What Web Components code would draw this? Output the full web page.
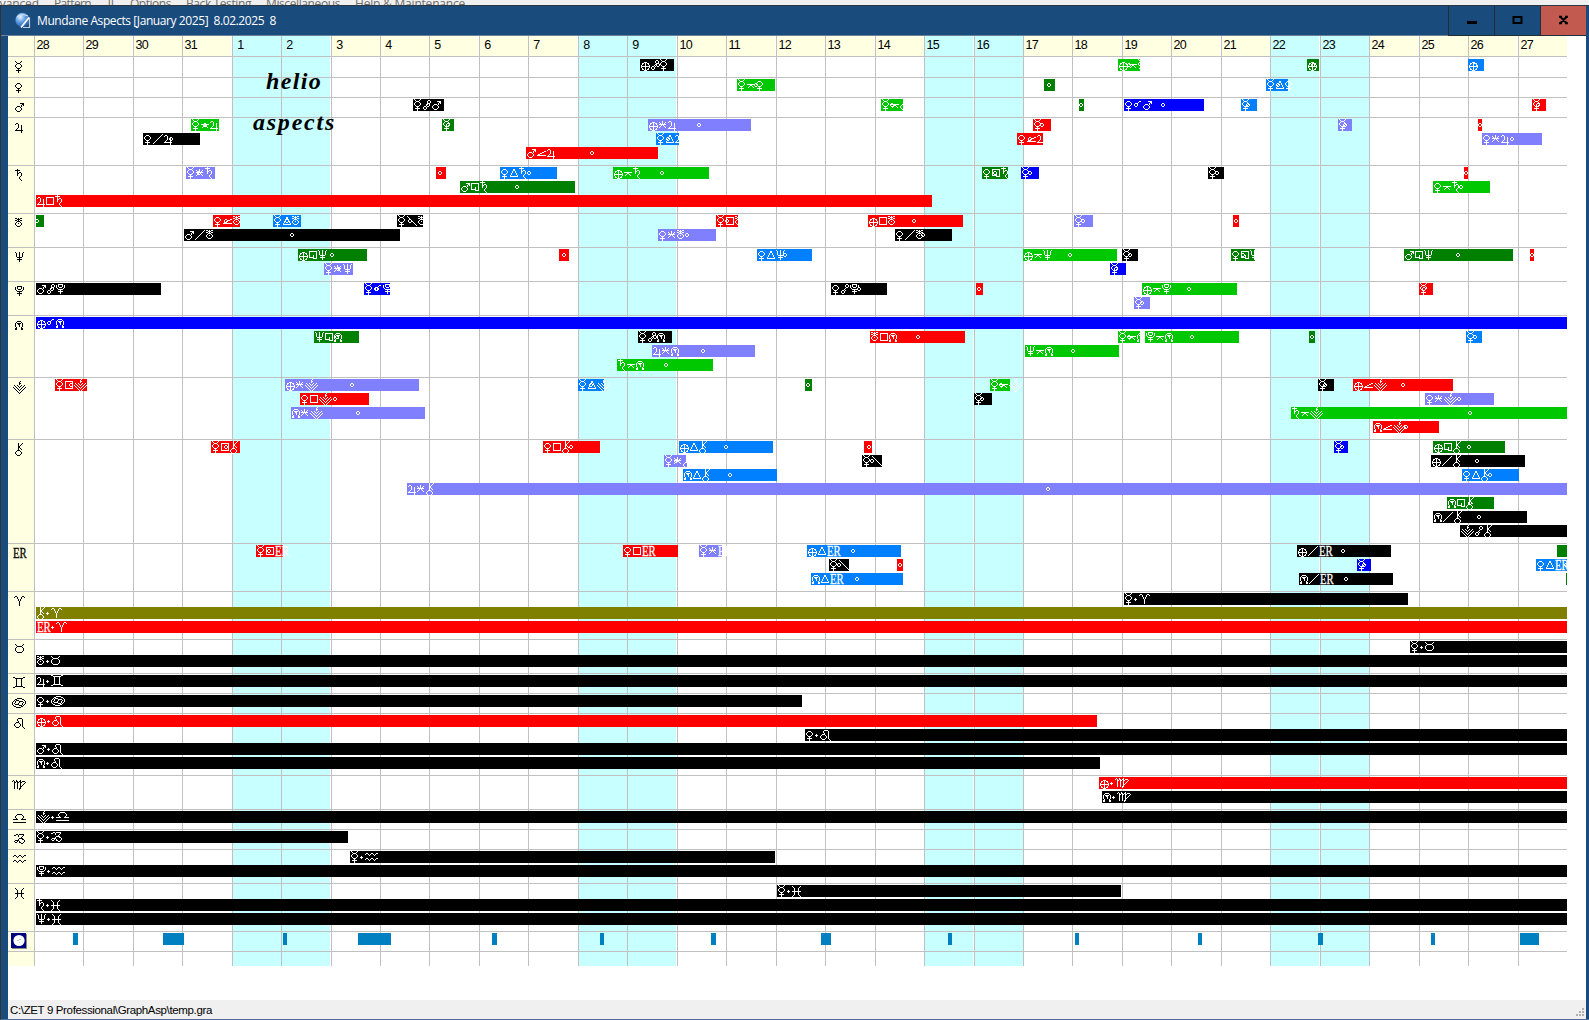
<!DOCTYPE html>
<html lang="en">
<head>
<meta charset="utf-8">
<title>Mundane Aspects</title>
<style>
html, body{ margin:0; height:100%; overflow:hidden; background:#f0f0f0; }
body{ font-family:"Liberation Sans", Arial, sans-serif; color:#000; }
</style>
</head>
<body>
<app-shell></app-shell>

<script>
const START = 34;
const END = 1567;
const dayX = k => Math.floor(34.3 + 49.46 * k);

const COLORS = {
   k:"#000", r:"#f00", g:"#008000", l:"#00c800", b:"#00f",
   s:"#0080ff", v:"#8080ff", o:"#808000", m:"#0080c0"
};

// symbol bitmaps: [first row, rows]
const SYMBOLS = {
   mer:[0,`#.....#.
.#...#..
..###...
.#...#..
#.....#.
#.....#.
.#...#..
..###...
...#....
.#####..
...#....
...#....`],
   ven:[2,`..###...
.#...#..
#.....#.
#.....#.
.#...#..
..###...
...#....
.#####..
...#....
...#....`],
   mars:[2,`.....####
.......##
......#.#
..###.#..
.#...#...
#.....#..
#.....#..
.#...#...
..###....`],
   jup:[2,`.##.....
#..#....
...#..#.
...#..#.
...#..#.
..#...#.
.#....#.
########
......#.
......#.`],
   sat:[0,`..#.....
#####...
..#.....
..#.##..
..##..#.
..#...#.
..#...#.
.....#..
....#...
....#...
.....#..
......#.`],
   ura:[1,`##.#.##.
..###...
##.#.##.
..###...
.#...#..
#..#..#.
#.....#.
.#...#..
..###...`],
   nep:[1,`#...#...#
.#..#..#.
.#..#..#.
.#..#..#.
.#..#..#.
..#####..
....#....
..#####..
....#....
....#....`],
   plu:[1,`..#####..
#.#...#.#
#.#...#.#
#..###..#
.#.....#.
..#####..
....#....
..#####..
....#....
....#....`],
   earth:[3,`...###...
.##.#.##.
.#..#..#.
#...#...#
#########
#...#...#
.#..#..#.
.##.#.##.
...###...`],
   node:[2,`..####..
.#....#.
#.####.#
#..##..#
#...#..#
#...#..#
.#....#.
##....##
##....##`],
   sel:[0,`.......#.....
......#......
......##.....
......#......
.#..#...#..#.
..#..#.#..#..
#..#..#..#..#
.#..#...#..#.
..#..#.#..#..
...#..#..#...
....#...#....
.....#.#.....
......#......`],
   chi:[0,`...#...#
...#..#.
...#.#..
...##...
...##...
...#.#..
...#..#.
..###...
.#...#..
#.....#.
#.....#.
.#...#..
..###...`],
   ari:[1,`.##.....##.
#..#...#..#
...#...#...
....#.#....
....#.#....
.....#.....
.....#.....
.....#.....
.....#.....
.....#.....`],
   tau:[1,`#.......#
.#.....#.
..#####..
.#.....#.
#.......#
#.......#
#.......#
.#.....#.
..#####..`],
   gem:[0,`##........##
..########..
...#....#...
...#....#...
...#....#...
...#....#...
...#....#...
...#....#...
...#....#...
..########..
##........##`],
   can:[1,`.....#####....
...##.....##..
..#.###.....#.
.#.#...####..#
#..#...#...#.#
#.#...#...#..#
#..####...#.#.
.#.....###.#..
..##.....##...
....#####.....`],
   leo:[1,`....####...
...#....#..
...#....#..
....#...#..
..###...#..
.#...#..#..
#.....#.#..
#.....#.#..
.#...#..#..
..###....#.
..........#`],
   vir:[1,`.#..#...#.....
#.#.##.##.###.
..##.##.##...#
..#..#..#...#.
..#..#..#..#..
..#..#..#.#...
..#..#..##....
..#..#..#.....
..#..#.##.....
.......#......`],
   lib:[1,`....#####....
...#.....#...
..#.......#..
..#.......#..
...#.....#...
#####...#####
.............
.............
#############`],
   cap:[1,`..##.#####.
##..#....#.
....#...#..
.......#...
.....####..
....#...##.
.####.....#
#..#.#....#
.##..##..#.
.......##..`],
   aqu:[2,`.##...##...##
#..#.#..#.#..
....#....#...
.............
.............
.##...##...##
#..#.#..#.#..
....#....#...`],
   pis:[1,`#.......#
.#.....#.
..#...#..
..#...#..
..#...#..
#########
..#...#..
..#...#..
..#...#..
.#.....#.
#.......#`],
   conj:[2,`.....##.
....#...
.###....
#..#....
#..#....
.##.....`],
   opp:[1,`.....##.
....#..#
....#..#
.....##.
....#...
...#....
.##.#...
#..#....
#..#....
.##.....`],
   sq:[2,`########
#......#
#......#
#......#
#......#
#......#
#......#
########`],
   sesq:[2,`########
#......#
#......#
#......#
#...#..#
#...#..#
#####..#
....####`],
   tri:[2,`...##...
...##...
..#..#..
..#..#..
.#....#.
.#....#.
#......#
########`],
   sext:[2,`...#....
#..#..#.
.#.#.#..
#######.
..#.#...
.#...#..
#.....#.`],
   quin:[5,`########
...##...
..#..#..
.#....#.`],
   semi:[4,`.......##
.....##..
...##....
.##......
#########`],
   par:[1,`.........#
........#.
.......#..
......#...
.....#....
....#.....
...#......
..#.......
.#........
#.........`],
   anti:[1,`#.........
.#........
..#.......
...#......
....#.....
.....#....
......#...
.......#..
........#.
.........#`],
   dot:[5,`.#..
###.
.#..`]
};

// symbol of the row, number of lanes, then the bars: lane, from, to, colour, label, exact time
const ROWS = [
   ["mer",1,[[0,640,674,"k","earth opp mer",658],[0,1118,1140,"l","earth quin mer",1129],[0,1307,1319,"g","earth",1313],[0,1468,1484,"s","earth",1475]]],
   ["ven",1,[[0,737,775,"l","mer quin ven",756],[0,1044,1055,"g","",1049],[0,1266,1288,"s","mer tri ven",1278]]],
   ["mars",1,[[0,413,444,"k","mer opp mars",428],[0,881,903,"l","mer quin mars",892],[0,1079,1084,"g","",1081],[0,1124,1204,"b","ven conj mars",1163],[0,1241,1257,"s","mer",1248],[0,1532,1546,"r","mer",1538]]],
   ["jup",3,[[0,191,219,"l","mer quin jup",205],[0,442,454,"g","mer",448],[0,648,751,"v","earth sext jup",699],[0,1033,1051,"r","mer",1042],[0,1338,1352,"v","mer",1345],[0,1478,1482,"r","",1480],
      [1,143,200,"k","ven par jup",171],[1,656,679,"s","mer tri jup",668],[1,1017,1043,"r","ven semi jup",1030],[1,1482,1542,"v","ven sext jup",1512],
      [2,526,658,"r","mars semi jup",592]]],
   ["sat",3,[[0,186,215,"v","mer sext sat",199],[0,436,446,"r","",440],[0,500,557,"s","ven tri sat",529],[0,613,709,"l","earth quin sat",662],[0,982,1008,"g","ven sesq sat",995],[0,1021,1039,"b","mer",1030],[0,1208,1224,"k","mer",1217],[0,1464,1468,"r","",1466],
      [1,460,575,"g","mars sesq sat",517],[1,1433,1490,"l","ven quin sat",1461],
      [2,36,932,"r","jup sq sat"]]],
   ["ura",2,[[0,36,44,"g","",37],[0,213,240,"r","ven semi ura",226],[0,273,301,"s","mer tri ura",287],[0,397,423,"k","mer anti ura",410],[0,716,738,"r","mer sq ura",727],[0,868,963,"r","earth sq ura",914],[0,1074,1093,"v","mer",1083],[0,1233,1239,"r","",1236],
      [1,184,400,"k","mars par ura",292],[1,658,716,"v","ven sext ura",687],[1,895,952,"k","ven par ura",923]]],
   ["nep",2,[[0,298,367,"g","earth sesq nep",332],[0,559,569,"r","",564],[0,757,812,"s","ven tri nep",785],[0,1023,1117,"l","earth quin nep",1070],[0,1122,1138,"k","mer",1130],[0,1231,1255,"g","ven sesq nep",1243],[0,1404,1513,"g","mars sesq nep",1458],[0,1530,1534,"r","",1532],
      [1,324,353,"v","mer sext nep",338],[1,1110,1126,"b","mer",1116]]],
   ["plu",2,[[0,36,161,"k","mars opp plu",52],[0,364,390,"b","mer conj plu",377],[0,831,887,"k","ven opp plu",859],[0,976,983,"r","",979],[0,1142,1237,"l","earth quin plu",1189],[0,1419,1433,"r","mer",1424],
      [1,1134,1150,"v","mer",1142]]],
   ["node",4,[[0,36,END,"b","earth conj node"],
      [1,314,359,"g","nep sesq node",337],[1,638,672,"k","mer opp node",655],[1,870,965,"r","ura sq node",918],[1,1118,1140,"l","mer quin node",1129],[1,1145,1239,"l","plu quin node",1192],[1,1309,1315,"g","",1312],[1,1466,1482,"s","mer",1475],
      [2,652,755,"v","jup sext node",703],[2,1025,1119,"l","nep quin node",1073],
      [3,617,713,"l","sat quin node",666]]],
   ["sel",4,[[0,55,87,"r","mer sq sel",71],[0,285,419,"v","earth sext sel",352],[0,578,604,"s","mer tri sel",591],[0,805,812,"g","",808],[0,990,1010,"l","mer quin sel",1001],[0,1318,1334,"k","mer",1325],[0,1353,1453,"r","earth semi sel",1403],
      [1,300,369,"r","ven sq sel",335],[1,974,992,"k","mer",982],[1,1425,1494,"v","ven sext sel",1459],
      [2,291,425,"v","node sext sel",358],[2,1291,END,"l","sat quin sel",1470],
      [3,1373,1439,"r","node semi sel",1406]]],
   ["chi",7,[[0,211,240,"r","mer sq chi",226],[0,543,600,"r","ven sq chi",571],[0,679,773,"s","earth tri chi",726],[0,864,872,"r","",869],[0,1334,1348,"b","mer",1342],[0,1433,1505,"g","earth sesq chi",1469],
      [1,664,687,"v","mer sext chi",676],[1,862,882,"k","mer anti",872],[1,1431,1525,"k","earth par chi",1477],
      [2,683,777,"s","node tri chi",730],[2,1462,1519,"s","ven tri chi",1490],
      [3,407,END,"v","jup sext chi",1048],
      [4,1447,1494,"g","node sesq chi",1470],
      [5,1433,1527,"k","node par chi",1479],
      [6,1460,END,"k","sel opp chi"]]],
   ["ER",3,[[0,256,283,"r","mer sq ER",269],[0,623,678,"r","ven sq ER"],[0,699,722,"v","mer sext ER"],[0,807,901,"s","earth tri ER",853],[0,1297,1391,"k","earth par ER",1343],[0,1557,END,"g",""],
      [1,829,849,"k","mer anti",839],[1,897,903,"r","",900],[1,1357,1371,"b","mer",1364],[1,1536,END,"s","ven tri ER",1566],
      [2,811,903,"s","node tri ER",857],[2,1299,1393,"k","node par ER",1346],[2,1566,END,"g",""]]],
   ["ari",3,[[0,1124,1408,"k","mer dot ari"],[1,36,END,"o","chi dot ari"],[2,36,END,"r","ER dot ari"]]],
   ["tau",2,[[0,1410,END,"k","mer dot tau"],[1,36,END,"k","ura dot tau"]]],
   ["gem",1,[[0,36,END,"k","jup dot gem"]]],
   ["can",1,[[0,36,802,"k","ven dot can"]]],
   ["leo",4,[[0,36,1097,"r","earth dot leo"],[1,805,END,"k","ven dot leo"],[2,36,END,"k","mars dot leo"],[3,36,1100,"k","node dot leo"]]],
   ["vir",2,[[0,1099,END,"r","earth dot vir"],[1,1102,END,"k","node dot vir"]]],
   ["lib",1,[[0,36,END,"k","sel dot lib"]]],
   ["cap",1,[[0,36,348,"k","mer dot cap"]]],
   ["aqu",2,[[0,350,775,"k","mer dot aqu"],[1,36,END,"k","plu dot aqu"]]],
   ["pis",3,[[0,777,1121,"k","mer dot pis"],[1,36,END,"k","sat dot pis"],[2,36,END,"k","nep dot pis"]]],
   ["moon",1,[[73,78],[163,184],[283,287],[358,391],[492,497],[600,604],[711,716],[821,831],[948,952],[1075,1079],[1198,1202],[1318,1323],[1431,1435],[1520,1539]].map(([a,b]) => [0,a,b,"m",""])]
];

// text stretched to a given width
window.customElements.define('fit-text', class extends HTMLElement {
   connectedCallback(){
      this.attachShadow({mode:'open'}).innerHTML = `<style>
:host{ display:block; white-space:pre; flex:none; width:calc(var(--w) * 1px); }
span{ display:inline-block; }
</style><span><slot></slot></span>`;
      const w = +this.getAttribute("width");
      this.style.setProperty("--w", w);
      const span = this.shadowRoot.querySelector("span");
      const chars = +this.getAttribute("chars") || this.textContent.length;
      const diff = w - span.getBoundingClientRect().width;
      span.style.letterSpacing = (diff / chars) + "px";
   }
});

window.customElements.define('astro-symbol', class extends HTMLElement {
   connectedCallback(){
      const name = this.getAttribute("name");
      const root = this.attachShadow({mode:'open'});
      const style = `<style>
:host{ display:block; flex:none; height:12px; }
svg{ display:block; overflow:visible; fill:currentColor; }
.er{ width:13px; height:12px; font:15px/12px "Liberation Serif", serif; -webkit-text-stroke:.3px currentColor; }
.er span{ display:inline-block; transform:scaleX(.72); transform-origin:0 0; }
      </style>`;
      if(name === "ER"){
	 root.innerHTML = style + `<div class="er"><span>ER</span></div>`;
	 return;
      }
      if(name === "moon"){
	 root.innerHTML = style + `
    <svg width="16" height="16" viewBox="0 0 16 16">
      <rect x="1" y="1" width="15" height="15" fill="#8c8c8c"/>
      <rect width="15" height="15" fill="#000080"/>
      <circle cx="8" cy="7.5" r="5.6" fill="#fff"/>
      <path d="M6 7.5h2M8 6.5h2M8 9.5h1" stroke="#c8c8c8" fill="none"/>
    </svg>`;
	 return;
      }
      const [top, bitmap] = SYMBOLS[name];
      const rows = bitmap.split("\n");
      let d = "";
      rows.forEach((row,y) => [...row].forEach((c,x) => {
	 if(c === "#") d += `M${x} ${y + top}h1v1h-1z`;
      }));
      root.innerHTML = style + `<svg width="${rows[0].length}" height="12" shape-rendering="crispEdges"><path d="${d}"/></svg>`;
   }
});

window.customElements.define('aspect-bar', class extends HTMLElement {
   connectedCallback(){
      const names = this.getAttribute("label").split(" ").filter(Boolean);
      const mark = this.getAttribute("mark");
      this.attachShadow({mode:'open'}).innerHTML = `
    <style>
:host{ display:flex; flex:none; gap:1px; position:relative; box-sizing:border-box; height:12px; padding-left:1px; color:#fff; }
svg{ position:absolute; top:4px; fill:#fff; }
    </style>
    ${names.map(n => `<astro-symbol name="${n}"></astro-symbol>`).join("")}
    ${mark === null ? "" : `<svg style="left:${mark - 2}px" width="4" height="4" shape-rendering="crispEdges"><path d="M1 0h2v1h-2zM1 3h2v1h-2zM0 1h1v2h-1zM3 1h1v2h-1z"/></svg>`}`;
   }
});

window.customElements.define('aspect-row', class extends HTMLElement {
   set data([symbol, lanes, bars]){
      let html = "";
      for(let i = 0; i < lanes; i++){
	 let x = START + 1;
	 html += `<div class="lane">`;
	 bars.filter(b => b[0] === i).forEach(([, from, to, color, label, mark]) => {
	    html += `<aspect-bar label="${label}" ${mark ? `mark="${mark - from}"` : ""} style="margin-left:${from - x}px;width:${to - from}px;background:${COLORS[color]}"></aspect-bar>`;
	    x = to;
	 });
	 html += `</div>`;
      }
      this.attachShadow({mode:'open'}).innerHTML = `
    <style>
:host{ display:flex; box-sizing:border-box; border-top:1px solid #c0c0c0; height:${lanes * 14 + 6}px; }
.name{ box-sizing:border-box; width:27px; padding:3px 5px 0 0; display:flex; justify-content:center; align-items:flex-start; }
.lanes{ display:flex; flex-direction:column; gap:2px; padding-top:1px; }
.lane{ display:flex; height:12px; }
:host(.first){ height:21px; }
:host(.first) .name{ padding-top:4px; }
:host(.first) .lanes{ padding-top:2px; }
:host(.moon) .name{ padding-top:1px; }
    </style>
    <div class="name"><astro-symbol name="${symbol}"></astro-symbol></div>
    <div class="lanes">${html}</div>`;
   }
});

window.customElements.define('day-column', class extends HTMLElement {
   connectedCallback(){
      this.attachShadow({mode:'open'}).innerHTML = `
    <style>
:host{ display:flex; flex-direction:column; flex:none; box-sizing:border-box; border-left:1px solid #c0c0c0; --bg:#fff; --head:#ffffe1; }
:host(.weekend){ --bg:#c8ffff; --head:#c8ffff; }
.head{ height:20px; max-width:48px; background:var(--head); font-size:12.5px; line-height:18px; letter-spacing:-.7px; white-space:pre; text-indent:1.5px; }
.body{ flex:1; max-width:48px; background:var(--bg); }
    </style>
    <div class="head"><slot></slot></div>
    <div class="body"></div>`;
   }
});

window.customElements.define('aspect-chart', class extends HTMLElement {
   connectedCallback(){
      let days = "";
      for(let k = 0; k < 31; k++){
	 const n = k < 4 ? 28 + k : k - 3;
	 const next = k < 30 ? dayX(k + 1) : END;
	 const weekend = n < 28 && k > 3 && (n % 7 === 1 || n % 7 === 2);
	 days += `<day-column ${weekend ? `class="weekend"` : ""} style="width:${next - dayX(k)}px">${n < 10 ? " " : ""}${n}</day-column>`;
      }
      const root = this.attachShadow({mode:'open'});
      root.innerHTML = `
    <style>
:host{ display:grid; grid-template:930px / 1559px; background:#fff; overflow:hidden; position:relative; }
.days, .rows{ grid-area:1/1; display:flex; overflow:hidden; }
.side{ width:26px; background:#ffffe1; }
.rows{ flex-direction:column; padding-top:20px; }
.end{ border-top:1px solid #c0c0c0; }
/* note written over the grid */
.note{ position:absolute; font:italic bold 24px/28px "Liberation Serif", serif; }
    </style>
    <div class="days"><div class="side"></div>${days}</div>
    <div class="rows"></div>
    <fit-text class="note" width="56" style="left:258px;top:31px">helio</fit-text>
    <fit-text class="note" width="83" style="left:245px;top:72px">aspects</fit-text>`;
      const rows = root.querySelector(".rows");
      ROWS.forEach((data,i) => {
	 const row = document.createElement("aspect-row");
	 if(i === 0) row.className = "first";
	 if(data[0] === "moon") row.className = "moon";
	 row.data = data;
	 rows.append(row);
      });
      rows.insertAdjacentHTML("beforeend", `<div class="end"></div>`);
   }
});

window.customElements.define('title-bar', class extends HTMLElement {
   connectedCallback(){
      this.attachShadow({mode:'open'}).innerHTML = `
    <style>
:host{ display:flex; align-items:stretch; height:30px; box-sizing:border-box; background:#1a4b7d; color:#fff; border-bottom:1px solid #6b8199; }
.icon{ margin:6px 6px 0 13px; flex:none; }
fit-text{ font:12px/29px "Open Sans", "Noto Sans", sans-serif; }
.fill{ flex:1; }
.btn{ display:flex; width:46px; height:30px; box-sizing:border-box; border-left:1px solid #222d3a; border-bottom:1px solid #222d3a; }
.close{ background:#c25a50; }
    </style>
    <svg class="icon" width="16" height="17" viewBox="0 0 16 17">
      <defs><radialGradient id="g" cx=".35" cy=".3" r=".8"><stop offset="0" stop-color="#e4f1ff"/><stop offset=".45" stop-color="#5b9be0"/><stop offset="1" stop-color="#1c4f9c"/></radialGradient></defs>
      <circle cx="7.5" cy="8" r="7.2" fill="url(#g)"/>
      <path d="M2 5Q7 1 13 4" stroke="#d8e8fa" fill="none"/>
      <path d="M14.5 5.5V15.5H8" stroke="#c4ccd4" stroke-width="1.2" fill="none"/>
      <path d="M6 15.5L14 5.5" stroke="#f8f8f8" stroke-width="1.8"/>
    </svg>
    <fit-text width="239" chars="44"><slot></slot></fit-text>
    <div class="fill"></div>
    <div class="btn"><svg width="46" height="29"><rect x="18" y="15" width="10" height="3"/></svg></div>
    <div class="btn"><svg width="46" height="29"><rect x="18.5" y="11" width="8" height="6" fill="none" stroke="#000" stroke-width="2"/></svg></div>
    <div class="btn close"><svg width="46" height="29"><path d="M18 10.8h3M24 10.8h3M18 17.2h3M24 17.2h3M19.5 11L25.5 17M25.5 11L19.5 17" stroke="#000" stroke-width="2"/></svg></div>`;
   }
});

window.customElements.define('status-bar', class extends HTMLElement {
   connectedCallback(){
      this.attachShadow({mode:'open'}).innerHTML = `
    <style>
:host{ display:flex; justify-content:space-between; align-items:flex-end; height:19px; padding:0 1px 0 2px; background:#f0f0f0; }
fit-text{ font-size:11.5px; line-height:18px; }
svg{ fill:#b0b0b0; margin-bottom:2px; }
    </style>
    <fit-text width="202" chars="39"><slot></slot></fit-text>
    <svg width="9" height="9" shape-rendering="crispEdges"><path d="M6 0h2v2h-2zM3 3h2v2h-2zM6 3h2v2h-2zM0 6h2v2h-2zM3 6h2v2h-2zM6 6h2v2h-2z"/></svg>`;
   }
});

// only the upper part of the main menu shows above the window
window.customElements.define('menu-strip', class extends HTMLElement {
   connectedCallback(){
      this.attachShadow({mode:'open'}).innerHTML = `
    <style>
:host{ display:flex; gap:15px; height:5px; overflow:hidden; background:#f0f0f0; color:#6d6d6d; font:12px/12px "Open Sans", sans-serif; margin-left:-15px; }
fit-text{ margin-top:-2px; }
    </style>
    <fit-text width="54">Advanced</fit-text>
    <fit-text width="37">Pattern</fit-text>
    <fit-text width="9">TL</fit-text>
    <fit-text width="41">Options</fit-text>
    <fit-text width="65">Back Testing</fit-text>
    <fit-text width="74">Miscellaneous</fit-text>
    <fit-text width="110">Help &amp; Maintenance</fit-text>`;
   }
});

window.customElements.define('app-shell', class extends HTMLElement {
   connectedCallback(){
      this.attachShadow({mode:'open'}).innerHTML = `
    <style>
:host{ display:flex; flex-direction:column; width:1589px; height:1020px; overflow:hidden; }
.window{ flex:1; display:flex; flex-direction:column; box-sizing:border-box; border-left:1px solid #333; border-top:1px solid #2b3643; border-bottom:1px solid #4a6f9c; background:#1a4b7d; padding:0 3px 0 0; }
.client{ flex:1; display:flex; flex-direction:column; margin-left:7px; background:#fff; }
title-bar{ padding-left:1px; }
.space{ flex:1; }
    </style>
    <menu-strip></menu-strip>
    <div class="window">
      <title-bar>Mundane Aspects [January 2025]  8.02.2025  8</title-bar>
      <div class="client">
        <aspect-chart></aspect-chart>
        <div class="space"></div>
        <status-bar>C:\\ZET 9 Professional\\GraphAsp\\temp.gra</status-bar>
      </div>
    </div>`;
   }
});
</script>
</body>
</html>
